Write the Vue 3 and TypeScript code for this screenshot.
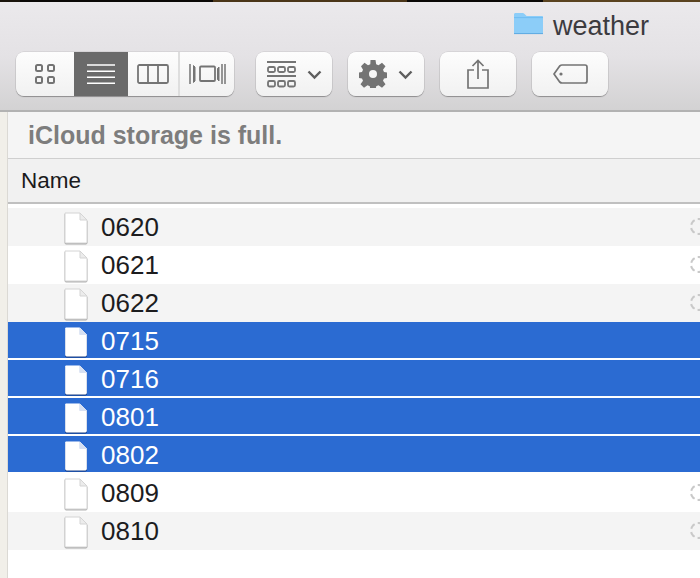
<template>
  <div class="finder">
    <div class="desktop-strip"></div>

    <header class="toolbar">
      <div class="title">
        <svg class="folder" viewBox="0 0 31 24" width="31" height="24">
          <path d="M1 22V3.500C1 2.600 1.600 2 2.500 2h7.200c.7 0 1.100.3 1.600.8L13.600 5H29c.6 0 1 .4 1 1v16c0 .6-.4 1-1 1H2c-.6 0-1-.4-1-1z" fill="#8ccdf8" />
          <path d="M1 6.600h29" stroke="#6fbcf2" stroke-width="1" />
          <path d="M1 22.600h29" stroke="#5ea9e0" stroke-width="1" />
        </svg>
        <span>weather</span>
      </div>

      <div class="tools">
        <div class="btn-group">
          <button class="seg seg-icons">
            <svg viewBox="0 0 22 22" width="22" height="22" fill="none" stroke="#747474" stroke-width="2">
              <rect x="2" y="2" width="6" height="6" rx="1.500" />
              <rect x="14" y="2" width="6" height="6" rx="1.500" />
              <rect x="2" y="14" width="6" height="6" rx="1.500" />
              <rect x="14" y="14" width="6" height="6" rx="1.500" />
            </svg>
          </button>
          <button class="seg seg-list">
            <svg viewBox="0 0 28 20" width="28" height="20" stroke="#fff" stroke-width="1.600">
              <path d="M0 1h28M0 7.200h28M0 13.200h28M0 19.200h28" />
            </svg>
          </button>
          <button class="seg seg-cols">
            <svg viewBox="0 0 32 20" width="32" height="20" fill="none" stroke="#747474" stroke-width="1.800">
              <rect x="1" y="1" width="30" height="18" rx="1.500" />
              <path d="M11 1v18M21 1v18" />
            </svg>
          </button>
          <button class="seg seg-flow">
            <svg viewBox="0 0 37 22" width="37" height="22" fill="none" stroke="#747474" stroke-width="1.500">
              <path d="M1 1v20M36 1v20M33 1v20" />
              <path d="M4.500 2.500L6 4v14l-1.500 1.500z" fill="#747474" stroke-width="1" />
              <rect x="11" y="3.500" width="15" height="14.500" rx="1" stroke-width="1.800" />
              <path d="M30 4l-1.500 1.500v11L30 18z" fill="#747474" stroke-width="1" />
            </svg>
          </button>
        </div>

        <button class="btn">
          <svg viewBox="0 0 29 27" width="29" height="27" fill="none" stroke="#747474">
            <path d="M0 1h29M0 15h29" stroke-width="2" />
            <rect v-for="x in [1, 11, 21]" :key="'a' + x" :x="x" y="6" width="7" height="5" rx="1.500" stroke-width="1.800" />
            <rect v-for="x in [1, 11, 21]" :key="'b' + x" :x="x" y="20" width="7" height="5.500" rx="1.500" stroke-width="1.800" />
          </svg>
          <svg class="chev" viewBox="0 0 15 10" width="15" height="10" fill="none" stroke="#5e5e5e" stroke-width="2.400">
            <path d="M1.500 1.500l6 6 6-6" />
          </svg>
        </button>

        <button class="btn">
          <svg viewBox="0 0 28 28" width="28" height="28">
            <path fill="#747474" fill-rule="evenodd" d="M11.500 0h5l.7 4.200 2.300 1 3.500-2.500 3.500 3.500-2.500 3.500 1 2.300 4 .7v5l-4 .7-1 2.300 2.500 3.500-3.500 3.500-3.500-2.500-2.300 1-.7 4.300h-5l-.7-4.300-2.300-1-3.500 2.500-3.500-3.500 2.500-3.500-1-2.300-4-.7v-5l4-.7 1-2.300L2 6.200l3.500-3.500L9 5.200l2.300-1zM14 10a4 4 0 1 0 0 8 4 4 0 0 0 0-8z" />
          </svg>
          <svg class="chev" viewBox="0 0 15 10" width="15" height="10" fill="none" stroke="#5e5e5e" stroke-width="2.400">
            <path d="M1.500 1.500l6 6 6-6" />
          </svg>
        </button>

        <button class="btn">
          <svg viewBox="0 0 22 30" width="22" height="30" fill="none" stroke="#747474" stroke-width="1.700">
            <path d="M7 11H1v18h20V11h-6M11 20V1.500M5.500 7L11 1.500 16.500 7" />
          </svg>
        </button>

        <button class="btn">
          <svg viewBox="0 0 35 20" width="35" height="20" fill="none" stroke="#747474" stroke-width="1.700">
            <path d="M9 1h23c1.200 0 2 .8 2 2v14c0 1.200-.8 2-2 2H9c-1 0-1.600-.4-2.300-1L1 10l5.700-8C7.400 1.400 8 1 9 1z" stroke-linejoin="round" />
            <circle cx="8" cy="10" r="1.600" fill="#747474" stroke="none" />
          </svg>
        </button>
      </div>
    </header>

    <main class="content">
      <div class="side-rail"></div>
      <div class="pane">
        <div class="banner">iCloud storage is full.</div>
        <div class="col-head">Name</div>
        <ul class="rows">
          <li
            v-for="(row, i) in rows"
            :key="row.name"
            class="row"
            :class="{ odd: i % 2 === 0, selected: row.selected }"
          >
            <svg class="doc" viewBox="0 0 24 32" width="24" height="32">
              <path d="M1 1h15l7 7v22c0 .6-.4 1-1 1H2c-.6 0-1-.4-1-1z" class="doc-page" />
              <path d="M16 1v7h7z" class="doc-fold" />
            </svg>
            <span class="name">{{ row.name }}</span>
            <span v-if="!row.selected" class="cloud"></span>
          </li>
        </ul>
      </div>
    </main>
  </div>
</template>

<script setup lang="ts">
interface FileRow {
  name: string
  selected: boolean
}

const rows: FileRow[] = [
  { name: '0620', selected: false },
  { name: '0621', selected: false },
  { name: '0622', selected: false },
  { name: '0715', selected: true },
  { name: '0716', selected: true },
  { name: '0801', selected: true },
  { name: '0802', selected: true },
  { name: '0809', selected: false },
  { name: '0810', selected: false },
]
</script>

<style>
html,
body {
  margin: 0;
  background: #fff;
}
</style>

<style scoped>
.finder {
  width: 700px;
  height: 578px;
  overflow: hidden;
  display: flex;
  flex-direction: column;
  font-family: 'Liberation Sans', Arial, sans-serif;
}

.desktop-strip {
  height: 2px;
  background: linear-gradient(to right, #1a140c 0 20px, #0a0806 20px 213px, #4a3518 213px 407px, #0a0806 407px 543px, #5a4320 543px);
}

/* toolbar */
.toolbar {
  height: 110px;
  box-sizing: border-box;
  padding-left: 16px;
  background: linear-gradient(to bottom, #ebe9ec 0%, #e4e2e5 50%, #d3d2d3 100%);
  border-bottom: 2px solid #b2b2b2;
}

.title {
  height: 48px;
  margin-bottom: 2px;
  padding-left: 497px;
  display: flex;
  align-items: center;
  gap: 9px;
  font-size: 27px;
  color: #3c3b3f;
}

.folder {
  margin-top: -6px;
}

.tools {
  display: flex;
  gap: 16px;
}

.btn-group,
.btn {
  height: 44px;
  box-sizing: border-box;
  border-radius: 8px;
  background: linear-gradient(to bottom, #fdfdfd, #f1f1f1);
  box-shadow: 0 1px 1px rgba(0, 0, 0, 0.3), 0 0 0 0.5px rgba(0, 0, 0, 0.12);
}

.btn-group {
  display: flex;
  width: 218px;
  margin-right: 6px;
  overflow: hidden;
}

.seg,
.btn {
  border: 0;
  padding: 0;
  display: flex;
  align-items: center;
  justify-content: center;
}

.seg {
  background: none;
}

.seg-icons {
  width: 58px;
}

.seg-list {
  width: 54px;
  background: #6a6a6a;
}

.seg-cols {
  width: 52px;
  border-right: 2px solid #dedede;
}

.seg-flow {
  flex: 1;
}

.btn {
  width: 76px;
  gap: 11px;
}

.chev {
  margin-top: 2px;
}

/* content */
.content {
  flex: 1;
  display: flex;
}

.side-rail {
  width: 7px;
  background: #f1efe9;
  border-right: 1px solid #dbd9d4;
}

.pane {
  flex: 1;
  min-width: 0;
}

.banner {
  height: 46px;
  box-sizing: border-box;
  padding: 1px 0 0 20px;
  display: flex;
  align-items: center;
  background: #f5f5f5;
  font-size: 25px;
  font-weight: 700;
  color: #7d7d7d;
  white-space: nowrap;
}

.col-head {
  height: 46px;
  box-sizing: border-box;
  padding: 1px 0 0 13px;
  display: flex;
  align-items: center;
  background: #f1f1f1;
  border-top: 1px solid #cfcfcf;
  border-bottom: 2px solid #c0c0c0;
  font-size: 22.500px;
  color: #1b1b1d;
}

.rows {
  list-style: none;
  margin: 4px 0 0;
  padding: 0;
}

.row {
  position: relative;
  height: 38px;
  box-sizing: border-box;
  padding-left: 56px;
  display: flex;
  align-items: center;
  gap: 13px;
  font-size: 26px;
  color: #1c1c1e;
}

.row.odd {
  background: #f4f4f4;
}

.row.selected {
  background: #2b6bd2;
  box-shadow: inset 0 -2px #fff;
  color: #fff;
}

.doc {
  flex: none;
  margin-top: 1px;
  filter: drop-shadow(0 1px 0.5px rgba(0, 0, 0, 0.3));
}

.doc-page {
  fill: #fff;
  stroke: #d4d4d4;
  stroke-width: 1;
}

.doc-fold {
  fill: #ececec;
  stroke: #d4d4d4;
  stroke-width: 1;
}

.selected .doc-page {
  stroke: #fff;
}

.selected .doc-fold {
  fill: #d6e0f2;
  stroke: #d6e0f2;
}

.selected .doc {
  height: 30px;
  filter: drop-shadow(0 1px 0.5px rgba(0, 20, 70, 0.6));
}

/* icloud status dots, clipped by the window edge */
.cloud {
  position: absolute;
  left: 682px;
  top: 10px;
  width: 17px;
  height: 17px;
  box-sizing: border-box;
  border: 2px dashed #c9c9c9;
  border-radius: 50%;
}
</style>
